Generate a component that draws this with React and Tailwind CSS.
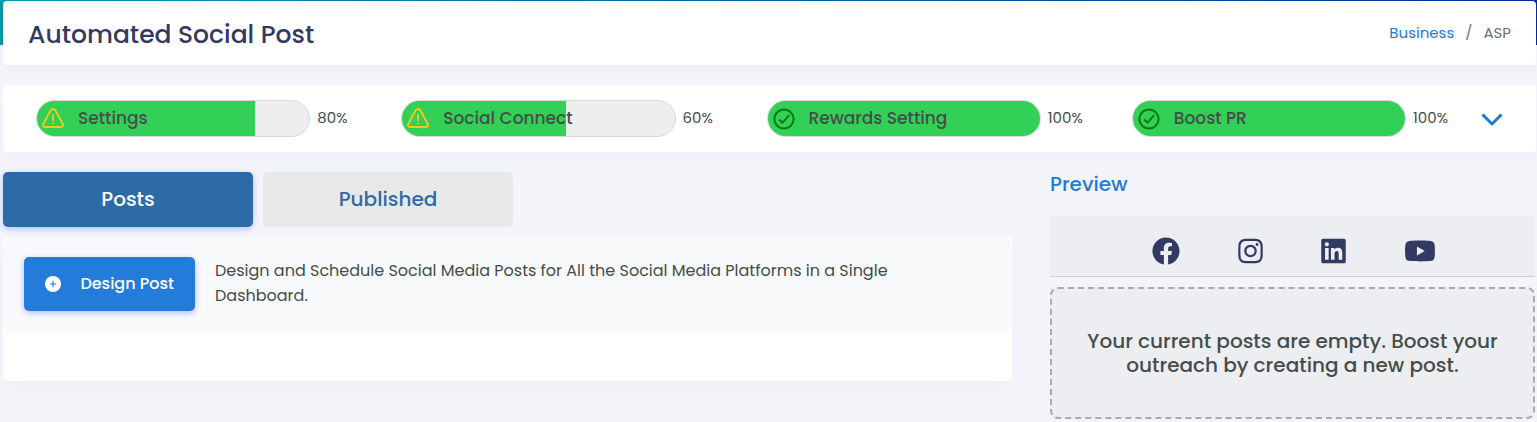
import React from "react";
import { FaFacebook, FaInstagram, FaLinkedin, FaYoutube } from "react-icons/fa";

const steps = [
  { label: "Settings", value: 80 },
  { label: "Social Connect", value: 60 },
  { label: "Rewards Setting", value: 100 },
  { label: "Boost PR", value: 100 },
];

const networks = [
  { name: "Facebook", Icon: FaFacebook, size: "h-7 w-7" },
  { name: "Instagram", Icon: FaInstagram, size: "h-7 w-[25px]" },
  { name: "LinkedIn", Icon: FaLinkedin, size: "h-7 w-[25px]" },
  { name: "YouTube", Icon: FaYoutube, size: "h-7 w-8" },
];

function DoneIcon() {
  return (
    <svg viewBox="0 0 22 22" className="size-[22px] shrink-0 text-[#0b7a12]" fill="none" stroke="currentColor" strokeWidth="2">
      <circle cx="11" cy="11" r="9.600" />
      <path d="M6 11.500 9.500 14.600 16.200 7.200" />
    </svg>
  );
}

function WarningIcon() {
  return (
    <svg
      viewBox="0 0 22 22"
      className="size-[22px] shrink-0 text-[#f7cb15]"
      fill="none"
      stroke="currentColor"
      strokeWidth="1.800"
      strokeLinejoin="round"
      strokeLinecap="round"
    >
      <path d="M8.700 2.300a2.700 2.700 0 0 1 4.600 0l7.400 13.500c.9 1.700 0 3.200-1.700 3.200H3c-1.700 0-2.600-1.500-1.700-3.200z" />
      <path d="M11 7v5.200M11 15.300v.3" />
    </svg>
  );
}

function AddIcon() {
  return (
    <svg viewBox="0 0 16 16" className="size-4" aria-hidden="true">
      <circle cx="8" cy="8" r="8" fill="#ffffff" />
      <path d="M8 4.800v6.400M4.800 8h6.400" stroke="#237cd9" strokeWidth="1.100" />
    </svg>
  );
}

function Step({ label, value }) {
  return (
    <li className="flex items-center gap-[7px]">
      <div
        role="progressbar"
        aria-label={label}
        aria-valuenow={value}
        aria-valuemin={0}
        aria-valuemax={100}
        className="relative h-[37px] flex-1 overflow-hidden rounded-full border border-[#d9d9d9] bg-[#eeeeee]"
      >
        <div className="absolute inset-y-0 left-0 bg-[#32d057]" style={{ width: `${value}%` }} />
        <div className="relative flex h-full items-center gap-[14px] pl-[5px] text-[17px] font-medium text-[#444d4a]">
          {value === 100 ? <DoneIcon /> : <WarningIcon />}
          <span className="whitespace-nowrap">{label}</span>
        </div>
      </div>
      <span className="w-9 text-[15px] whitespace-nowrap text-[#444d4a]">{value}%</span>
    </li>
  );
}

export default function App() {
  return (
    <div className="min-h-screen bg-[#f4f5fa] font-['Poppins','Inter',sans-serif] text-[#444d4a]">
      <div className="absolute inset-x-0 top-0 h-[45px] bg-linear-to-r from-[#0097a7] to-[#03299a]" />
      <div className="relative flex flex-col gap-5 pt-px pr-px pl-[3px]">
        <header className="flex h-16 items-center justify-between rounded bg-white px-[25px] shadow-[0_8px_12px_rgba(0,0,0,0.025)]">
          <h1 className="pt-[3px] text-[25px] font-medium text-[#323a63]">Automated Social Post</h1>
          <nav aria-label="Breadcrumb" className="flex gap-[11px] text-[15px] text-[#6c757d]">
            <a href="#business" className="text-[#227bd9]">
              Business
            </a>
            <span>/</span>
            <span>ASP</span>
          </nav>
        </header>

        <section className="flex h-[67px] items-center gap-8 rounded bg-white px-[33px] shadow-[0_8px_12px_rgba(0,0,0,0.025)]">
          <ul className="grid flex-1 grid-cols-4 gap-12">
            {steps.map((step) => (
              <Step key={step.label} {...step} />
            ))}
          </ul>
          <button type="button" aria-label="Show details" className="text-[#227bd9]">
            <svg viewBox="0 0 22 22" className="size-[22px]" fill="none" stroke="currentColor" strokeWidth="3">
              <path d="M1.500 6.500 11 16l9.500-9.500" strokeLinejoin="round" />
            </svg>
          </button>
        </section>

        <div className="flex gap-[38px]">
          <main className="flex min-w-0 flex-[1009] flex-col gap-[10px]">
            <div role="tablist" className="flex gap-[10px]">
              <button
                type="button"
                role="tab"
                aria-selected="true"
                className="h-[55px] w-[250px] rounded-[5px] bg-[#2d6ba8] pb-[2px] text-xl font-medium text-white shadow-[0_2px_6px_#b8bcf5]"
              >
                Posts
              </button>
              <button
                type="button"
                role="tab"
                aria-selected="false"
                className="h-[55px] w-[250px] rounded-[5px] bg-[#e8e8e8] pb-[2px] text-xl font-medium text-[#2d6ba8]"
              >
                Published
              </button>
            </div>
            <section className="rounded bg-white px-px pb-[50px] shadow-[0_8px_12px_rgba(0,0,0,0.025)]">
              <div className="flex gap-5 rounded-[5px] bg-[#f8f9fb] p-5">
                <button
                  type="button"
                  className="flex h-[54px] w-[171px] shrink-0 items-center justify-between rounded-[5px] bg-[#237cd9] px-[21px] text-base font-medium text-white shadow-[0_2px_6px_#b8bcf5]"
                >
                  <AddIcon />
                  Design Post
                </button>
                <p className="max-w-[700px] pt-px text-base leading-[25px]">
                  Design and Schedule Social Media Posts for All the Social Media Platforms in a Single Dashboard.
                </p>
              </div>
            </section>
          </main>

          <aside className="mr-px flex min-w-0 flex-[485] flex-col">
            <h2 className="text-xl leading-6 font-medium text-[#227bd9]">Preview</h2>
            <ul className="mt-5 flex h-[61px] items-center justify-center gap-[58px] border-b border-[#cfcfcf] bg-[#edeef2] pt-[10px] pl-[2px] text-[#323a63]">
              {networks.map(({ name, Icon, size }) => (
                <li key={name}>
                  <Icon role="img" aria-label={name} className={size} />
                </li>
              ))}
            </ul>
            <div className="mt-[10px] flex h-[132px] items-center justify-center rounded-lg border-2 border-dashed border-[#a9aaac] bg-[#edeef2] px-8">
              <p className="text-center text-xl leading-6 font-medium">
                Your current posts are empty. Boost your outreach by creating a new post.
              </p>
            </div>
          </aside>
        </div>
      </div>
    </div>
  );
}
